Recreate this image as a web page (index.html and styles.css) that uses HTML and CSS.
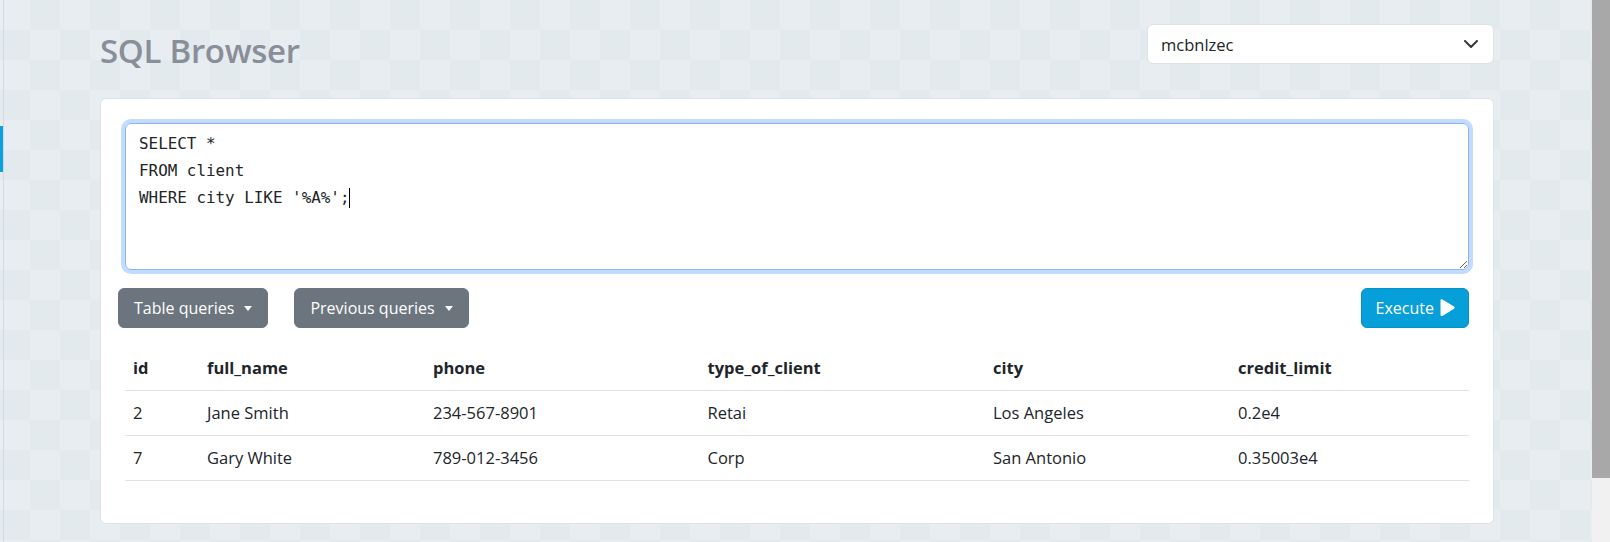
FILE: index.html
```html
<!DOCTYPE html>
<html lang="en">
<head>
<meta charset="utf-8">
<title>SQL Browser</title>
<link rel="stylesheet" href="styles.css">
</head>
<body>
<div class="edge-line"></div>
<div class="edge-tab"></div>
<div class="page">
  <header class="header">
    <h1 class="title">SQL Browser</h1>
    <div class="db-select">
      <span class="db-name">mcbnlzec</span>
      <svg class="chevron" width="14" height="8" viewBox="0 0 14 8"><path d="M1 1l6 6 6-6" fill="none" stroke="#343a40" stroke-width="2" stroke-linecap="round" stroke-linejoin="round"/></svg>
    </div>
  </header>
  <main class="card">
    <div class="editor">SELECT *
FROM client
WHERE city LIKE '%A%';<span class="cursor"></span></div>
    <div class="toolbar">
      <div class="btn-group">
        <button class="btn btn-gray">Table queries<span class="caret"></span></button>
        <button class="btn btn-gray">Previous queries<span class="caret"></span></button>
      </div>
      <button class="btn btn-exec">Execute<svg class="play" width="16" height="18" viewBox="0 0 16 18"><path d="M1.5 1.6C1.5 0.6 2.5 0 3.4 0.5L15 7.6c0.8 0.5 0.8 1.7 0 2.2L3.4 16.9C2.5 17.4 1.5 16.8 1.5 15.8Z" fill="#fff"/></svg></button>
    </div>
    <table class="results">
      <colgroup>
        <col class="c-id"><col class="c-name"><col class="c-phone"><col class="c-type"><col class="c-city"><col class="c-credit">
      </colgroup>
      <thead>
        <tr><th>id</th><th>full_name</th><th>phone</th><th>type_of_client</th><th>city</th><th>credit_limit</th></tr>
      </thead>
      <tbody>
        <tr><td>2</td><td>Jane Smith</td><td>234-567-8901</td><td>Retai</td><td>Los Angeles</td><td>0.2e4</td></tr>
        <tr><td>7</td><td>Gary White</td><td>789-012-3456</td><td>Corp</td><td>San Antonio</td><td>0.35003e4</td></tr>
      </tbody>
    </table>
  </main>
</div>
<div class="scrollbar"><div class="scroll-thumb"></div></div>
</body>
</html>
```
FILE: styles.css
```css
* { box-sizing: border-box; }

html, body { height: 100%; }

body {
  margin: 0;
  padding-right: 16px;
  overflow: hidden;
  font-family: "Open Sans", "Noto Sans", sans-serif;
  color: #212529;
  background-color: #e5ecef;
  background-image: repeating-conic-gradient(#e3eaee 0 25%, #e7edf0 0 50%);
  background-size: 60px 60px;
}

.edge-line {
  position: fixed;
  left: 3px;
  top: 0;
  width: 1px;
  height: 100%;
  background: #d2dadf;
}

.edge-tab {
  position: fixed;
  left: 0;
  top: 126px;
  width: 3px;
  height: 46px;
  background: #0aa2dc;
}

.page {
  width: 1394px;
  margin: 0 auto;
}

.header {
  display: flex;
  justify-content: space-between;
  align-items: flex-start;
  padding-top: 24px;
}

.title {
  margin: 0;
  font-size: 33px;
  font-weight: 600;
  line-height: 54px;
  color: #898e98;
  letter-spacing: -0.3px;
}

.db-select {
  width: 347px;
  height: 40px;
  display: flex;
  align-items: center;
  justify-content: space-between;
  padding: 0 15px 0 13px;
  background: #fff;
  border: 1px solid #dee2e6;
  border-radius: 6px;
  font-size: 16.5px;
  color: #212529;
}

.chevron { display: block; }

.card {
  margin-top: 20px;
  background: #fff;
  border: 1px solid #dde3e8;
  border-radius: 6px;
  padding: 24px 24px 26px;
}

.editor {
  height: 147px;
  padding: 6px 12px 6px 13px;
  border: 1px solid #86b7fe;
  border-radius: 6px;
  box-shadow: 0 0 0 4px rgba(13, 110, 253, 0.25);
  font-family: "DejaVu Sans Mono", "Liberation Mono", monospace;
  font-size: 15.9px;
  line-height: 27px;
  color: #212529;
  white-space: pre;
  overflow: auto;
  resize: vertical;
}

.cursor {
  display: inline-block;
  width: 1px;
  height: 20px;
  background: #000;
  vertical-align: -5px;
}

.toolbar {
  display: flex;
  justify-content: space-between;
  align-items: center;
  margin: 18px 0 18px -7px;
}

.btn-group {
  display: flex;
  gap: 26px;
}

.btn {
  display: inline-flex;
  align-items: center;
  height: 40px;
  padding: 0 15px;
  border: 1px solid transparent;
  border-radius: 6px;
  font-family: "Open Sans", "Noto Sans", sans-serif;
  font-size: 16px;
  color: #fff;
  cursor: pointer;
}

.btn-gray {
  background: #6c757d;
  border-color: #6c757d;
}

.caret {
  display: inline-block;
  margin-left: 10px;
  border-top: 5px solid #fff;
  border-left: 4.5px solid transparent;
  border-right: 4.5px solid transparent;
}

.btn-exec {
  padding: 0 13px 0 14px;
  background: #069fd9;
  border-color: #0590c6;
  gap: 5px;
}

.play { display: block; }

.results {
  width: 100%;
  border-collapse: collapse;
  margin-bottom: 16px;
  font-size: 16.5px;
  line-height: 26px;
}

.results th,
.results td {
  padding: 9px 8px;
  text-align: left;
  border-bottom: 1px solid #dee2e6;
}

.results th { font-weight: 700; }

.c-id { width: 74px; }
.c-name { width: 226px; }
.c-phone { width: 274.5px; }
.c-type { width: 285.5px; }
.c-city { width: 245px; }

.scrollbar {
  position: fixed;
  right: 0;
  top: 0;
  width: 18px;
  height: 100%;
  background: #f1f1f1;
}

.scroll-thumb {
  height: 478px;
  background: #a8a8a8;
}
```
